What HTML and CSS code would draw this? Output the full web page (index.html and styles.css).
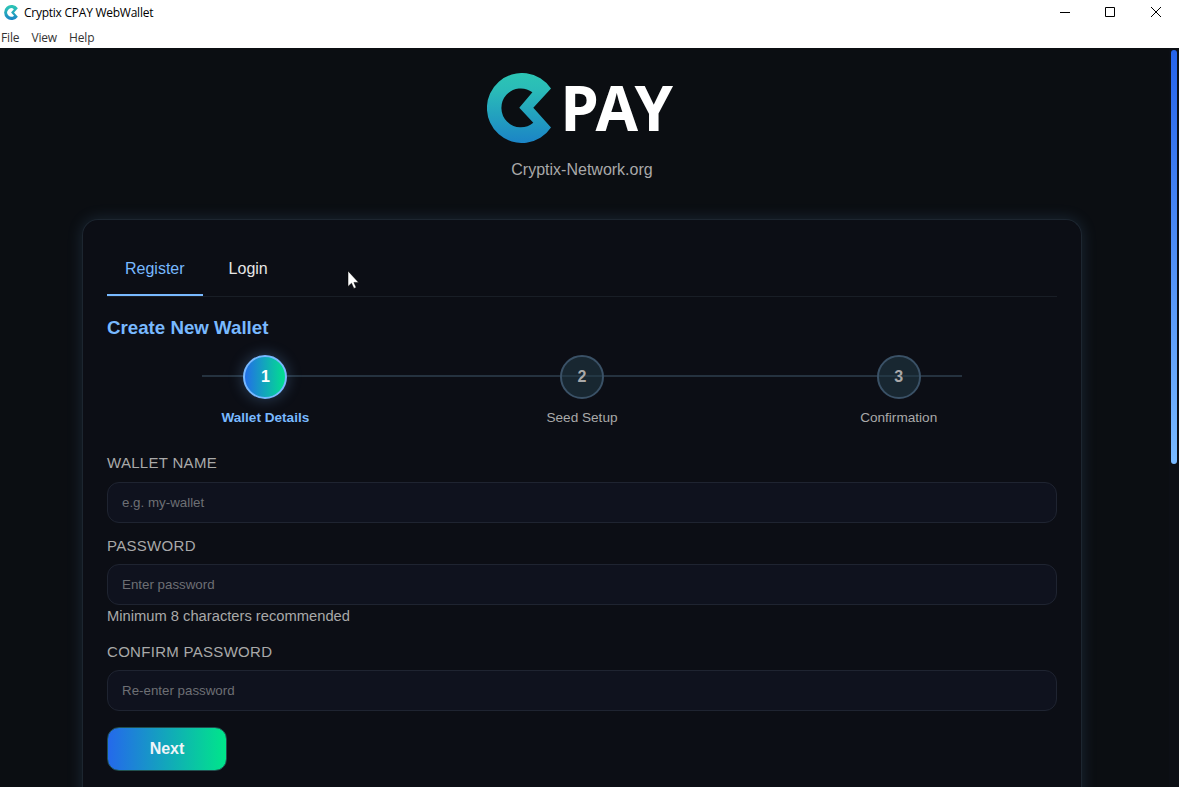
FILE: index.html
```
<!DOCTYPE html>
<html lang="en">
<head>
  <meta charset="UTF-8">
  <meta name="viewport" content="width=device-width, initial-scale=1.0">
  <title>Cryptix CPAY WebWallet</title>
  <link rel="stylesheet" href="styles.css">
</head>
<body>
  <svg width="0" height="0" class="defs">
    <defs>
      <linearGradient id="cgrad" x1="0" y1="0" x2="0" y2="1">
        <stop offset="0" stop-color="#2cc5b4"/>
        <stop offset="0.25" stop-color="#2abbb8"/>
        <stop offset="1" stop-color="#1b84c6"/>
      </linearGradient>
      <symbol id="mark" viewBox="0 -0.5 64 70">
        <path fill="url(#cgrad)" d="M64 15 A35 35 0 1 0 64 54 L46.3 34.2 Z M45.4 18.8 L32.3 34.3 L46.3 49.2 A19.4 19.4 0 1 1 45.4 18.8 Z" fill-rule="evenodd"/>
      </symbol>
    </defs>
  </svg>

  <!-- window title -->
  <header class="titlebar">
    <svg class="app-icon"><use href="#mark"/></svg>
    <span class="app-title">Cryptix CPAY WebWallet</span>
    <div class="win-buttons">
      <svg width="46" height="24" viewBox="0 0 46 24"><path d="M17 12.5h10"/></svg>
      <svg width="46" height="24" viewBox="0 0 46 24"><path d="M16.5 7.5h9v9h-9z"/></svg>
      <svg width="44" height="24" viewBox="0 0 44 24"><path d="M16 7l10 10M26 7L16 17"/></svg>
    </div>
  </header>
  <nav class="menubar">
    <span>File</span>
    <span>View</span>
    <span>Help</span>
  </nav>

  <div class="view">
    <main class="page">
      <div class="logo">
        <svg class="logo-mark"><use href="#mark"/></svg>
        <svg class="logo-text" width="124" height="110"><text x="0.5" y="78" textLength="112.5" lengthAdjust="spacingAndGlyphs">PAY</text></svg>
      </div>
      <p class="site">Cryptix-Network.org</p>

      <section class="card">
        <div class="tabs">
          <div class="tab active">Register</div>
          <div class="tab">Login</div>
        </div>

        <h2>Create New Wallet</h2>

        <div class="steps">
          <div class="step active">
            <div class="circle">1</div>
            <div class="step-label">Wallet Details</div>
          </div>
          <div class="step">
            <div class="circle">2</div>
            <div class="step-label">Seed Setup</div>
          </div>
          <div class="step">
            <div class="circle">3</div>
            <div class="step-label">Confirmation</div>
          </div>
        </div>

        <form>
          <label for="walletName">Wallet Name</label>
          <input type="text" id="walletName" placeholder="e.g. my-wallet">
          <label for="password">Password</label>
          <input type="password" id="password" placeholder="Enter password">
          <small>Minimum 8 characters recommended</small>
          <label for="confirmPassword">Confirm Password</label>
          <input type="password" id="confirmPassword" placeholder="Re-enter password">
          <button type="button" class="btn">Next</button>
        </form>
      </section>
    </main>

    <div class="scrollbar"><div class="thumb"></div></div>
  </div>

  <svg class="cursor" width="13" height="20" viewBox="0 0 13 20"><path d="M1 1v15.5l3.5-3.3 2.4 5.2 2.3-1-2.3-5H11.6z" fill="#fff" stroke="#000" stroke-width="0.5"/></svg>
</body>
</html>
```
FILE: styles.css
```
* {
  box-sizing: border-box;
}
body {
  margin: 0;
  height: 787px;
  display: flex;
  flex-direction: column;
  overflow: hidden;
  background: #0b0e13;
  font-family: "Liberation Sans", Arial, sans-serif;
  font-size: 16px;
  color: #e6e6e6;
}
.defs {
  position: absolute;
}

/* window frame */
.titlebar {
  height: 25px;
  flex-shrink: 0;
  display: flex;
  align-items: center;
  padding-left: 4px;
  background: #fff;
  color: #000;
  font: 12px/24px "Open Sans", sans-serif;
}
.app-icon {
  width: 14px;
  height: 15px;
}
.app-title {
  margin-left: 6px;
  letter-spacing: -0.25px;
}
.win-buttons {
  display: flex;
  margin-left: auto;
  height: 25px;
}
.win-buttons svg {
  fill: none;
  stroke: #000;
  stroke-width: 1;
}
.menubar {
  height: 23px;
  flex-shrink: 0;
  display: flex;
  gap: 12px;
  padding-left: 1px;
  background: #fff;
  color: #333;
  font: 12px/26px "Open Sans", sans-serif;
  letter-spacing: -0.15px;
}

/* page */
.view {
  flex: 1;
  min-height: 0;
  display: flex;
  overflow: hidden;
  background: #0b0e12;
}
.page {
  width: 1164px;
  padding-top: 25px;
  display: flex;
  flex-direction: column;
  align-items: center;
}
.logo {
  display: flex;
  width: 190px;
  height: 70px;
}
.logo-mark {
  width: 64px;
  height: 70px;
  flex-shrink: 0;
}
.logo-text {
  flex-shrink: 0;
  margin: -20px 0 0 9px;
}
.logo-text text {
  font: bold 63px "Noto Sans", sans-serif;
  fill: #fff;
}
.site {
  margin: 17px 0 39px;
  line-height: 20px;
  color: #a9a9a9;
}
.card {
  width: 1000px;
  height: 619px;
  flex-shrink: 0;
  padding: 24px;
  background: #0c0e15;
  border: 1px solid #1d2630;
  border-bottom: 0;
  border-radius: 16px 16px 0 0;
  box-shadow: 0 0 16px rgba(120, 185, 255, 0.15);
}
.tabs {
  display: flex;
  gap: 8px;
  height: 53px;
  border-bottom: 1px solid #191e26;
}
.tab {
  height: 52px;
  padding: 0 18px;
  line-height: 49px;
}
.tab.active {
  color: #78b9ff;
  border-bottom: 2px solid #78b9ff;
}
h2 {
  margin: 20px 0 16px;
  font-size: 18.72px;
  line-height: 22px;
  color: #78b9ff;
}

.steps {
  display: flex;
  background: linear-gradient(#25323f, #25323f) 50% 20px / 80% 2px no-repeat;
}
.step {
  flex: 1;
  display: flex;
  flex-direction: column;
  align-items: center;
}
.circle {
  width: 44px;
  height: 44px;
  border: 2px solid #3a5166;
  border-radius: 50%;
  background: rgba(35, 60, 72, 0.55);
  line-height: 40px;
  text-align: center;
  font-weight: bold;
  color: #a9a9a9;
}
.step-label {
  margin-top: 10px;
  font-size: 13.6px;
  line-height: 18px;
  color: #a9a9a9;
}
.step.active .circle {
  background: linear-gradient(90deg, #2469eb, #00e68a) border-box;
  border-color: #78b9ff;
  color: #fff;
  box-shadow: 0 0 15px rgba(120, 185, 255, 0.3);
}
.step.active .step-label {
  color: #78b9ff;
  font-weight: bold;
}

form {
  display: flex;
  flex-direction: column;
  align-items: flex-start;
  padding-top: 26px;
}
label {
  font-size: 15px;
  letter-spacing: 0.3px;
  line-height: 19px;
  margin-bottom: 10px;
  text-transform: uppercase;
  color: #a9a9a9;
}
input {
  width: 100%;
  height: 41px;
  margin-bottom: 13px;
  padding: 0 14px;
  background: #0f121e;
  border: 1px solid #1f2431;
  border-radius: 12px;
  font: 13.33px "Liberation Sans", Arial, sans-serif;
  color: #e6e6e6;
}
input + label,
small + label {
  margin-bottom: 9px;
}
input::placeholder {
  color: #6d6f74;
}
small {
  margin: -13px 0 15px;
  font-size: 14.72px;
  line-height: 22px;
  color: #a9a9a9;
}
.btn {
  width: 120px;
  height: 44px;
  margin-top: 3px;
  border: 1px solid #20504f;
  border-radius: 12px;
  background: linear-gradient(90deg, #2469eb, #00e68a);
  font: bold 16px "Liberation Sans", Arial, sans-serif;
  color: #f0f4f8;
}

.scrollbar {
  width: 10px;
  margin-left: 5px;
  padding: 2px;
  background: #0c0f15;
}
.thumb {
  height: 414px;
  border-radius: 3px;
  background: linear-gradient(#2563eb, #78b9ff);
}
.cursor {
  position: absolute;
  left: 347px;
  top: 270px;
}
```
